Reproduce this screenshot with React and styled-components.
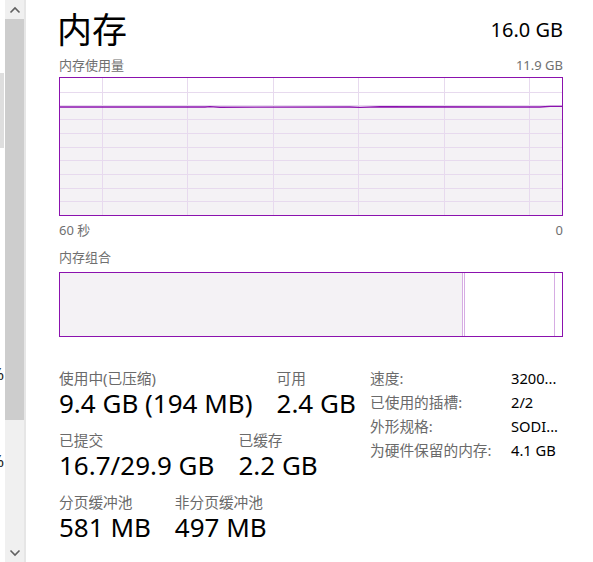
import React from "react";
import styled, { createGlobalStyle } from "styled-components";

const GlobalStyle = createGlobalStyle`
  html, body {
    margin: 0;
    padding: 0;
    background: #ffffff;
  }
  body {
    font-family: "Noto Sans", "Noto Sans CJK SC", sans-serif;
    color: #000;
  }
`;

const PURPLE = "#8b12ae";
const GRID = "#e7daee";
const FILL = "#f4f2f5";

const usage = [
  [0, 29], [145, 29], [150, 28.6], [160, 29.2], [290, 29], [300, 29.4], [320, 28.8],
  [480, 29], [490, 28.4], [502, 28.4],
];

function UsageChart() {
  const w = 502;
  const h = 137;
  const cols = [42, 127, 213, 298, 384, 469];
  const rows = Array.from({ length: 9 }, (_, i) => ((i + 1) * h) / 10);
  const pts = usage.map(([x, y]) => `${x},${y}`).join(" ");
  return (
    <ChartBox $height={139}>
      <svg width={w} height={h} viewBox={`0 0 ${w} ${h}`}>
        <polygon points={`0,${h} ${pts} ${w},${h}`} fill={FILL} />
        {cols.map((x) => (
          <line key={x} x1={x + 0.5} y1={0} x2={x + 0.5} y2={h} stroke={GRID} strokeWidth="1" />
        ))}
        {rows.map((y) => (
          <line key={y} x1={0} y1={Math.round(y) + 0.5} x2={w} y2={Math.round(y) + 0.5} stroke={GRID} strokeWidth="1" />
        ))}
        <polyline points={pts} fill="none" stroke={PURPLE} strokeWidth="1.4" />
      </svg>
    </ChartBox>
  );
}

function CompositionChart() {
  return (
    <ChartBox $height={65}>
      <svg width={502} height={63} viewBox="0 0 502 63">
        <rect x="0" y="0" width="402" height="63" fill={FILL} />
        <line x1="402.5" y1="0" x2="402.5" y2="63" stroke="#d6ace3" />
        <line x1="404.5" y1="0" x2="404.5" y2="63" stroke="#d6ace3" />
        <line x1="494.5" y1="0" x2="494.5" y2="63" stroke="#d6ace3" />
      </svg>
    </ChartBox>
  );
}

const stats = [
  [
    { label: "使用中(已压缩)", value: "9.4 GB (194 MB)" },
    { label: "可用", value: "2.4 GB" },
  ],
  [
    { label: "已提交", value: "16.7/29.9 GB" },
    { label: "已缓存", value: "2.2 GB" },
  ],
  [
    { label: "分页缓冲池", value: "581 MB" },
    { label: "非分页缓冲池", value: "497 MB" },
  ],
];

const specs = [
  ["速度:", "3200..."],
  ["已使用的插槽:", "2/2"],
  ["外形规格:", "SODI..."],
  ["为硬件保留的内存:", "4.1 GB"],
];

export default function App() {
  return (
    <>
      <GlobalStyle />
      <Window>
        <Side>
          <SideClip>
            <SideHighlight />
            <SideMark $top={362}>%</SideMark>
            <SideMark $top={449}>%</SideMark>
            <SideMark $top={543}>&lt;</SideMark>
          </SideClip>
          <Scrollbar>
            <ScrollArrow>
              <svg width="12" height="8" viewBox="0 0 12 8">
                <polyline points="1.5,6.5 6,2 10.5,6.5" fill="none" stroke="#606060" strokeWidth="1.6" />
              </svg>
            </ScrollArrow>
            <Thumb />
            <Track />
            <ScrollArrow>
              <svg width="12" height="8" viewBox="0 0 12 8">
                <polyline points="1.5,1.5 6,6 10.5,1.5" fill="none" stroke="#606060" strokeWidth="1.6" />
              </svg>
            </ScrollArrow>
          </Scrollbar>
        </Side>

        <Main>
          <TitleRow>
            <Title>内存</Title>
            <Total>16.0 GB</Total>
          </TitleRow>

          <CaptionRow>
            <span>内存使用量</span>
            <span>11.9 GB</span>
          </CaptionRow>
          <UsageChart />
          <CaptionRow $top={5}>
            <span>60 秒</span>
            <span>0</span>
          </CaptionRow>

          <CaptionRow $top={6} $bottom={3}>
            <span>内存组合</span>
          </CaptionRow>
          <CompositionChart />

          <Details>
            <StatsColumn>
              {stats.map((row, i) => (
                <StatRow key={i}>
                  {row.map((s) => (
                    <Stat key={s.label}>
                      <StatLabel>{s.label}</StatLabel>
                      <StatValue>{s.value}</StatValue>
                    </Stat>
                  ))}
                </StatRow>
              ))}
            </StatsColumn>
            <SpecGrid>
              {specs.map(([k, v]) => (
                <React.Fragment key={k}>
                  <SpecLabel>{k}</SpecLabel>
                  <SpecValue>{v}</SpecValue>
                </React.Fragment>
              ))}
            </SpecGrid>
          </Details>
        </Main>
      </Window>
    </>
  );
}

const Window = styled.div`
  display: flex;
  width: 593px;
  height: 562px;
  overflow: hidden;
  background: #fff;
`;

const Side = styled.div`
  display: flex;
  width: 24px;
  flex-shrink: 0;
  border-right: 2px solid #e6e6e6;
`;

const SideClip = styled.div`
  position: relative;
  width: 5px;
  overflow: hidden;
`;

const SideHighlight = styled.div`
  position: absolute;
  left: 0;
  top: 73px;
  width: 4px;
  height: 75px;
  background: #dedede;
`;

const SideMark = styled.span`
  position: absolute;
  top: ${(p) => p.$top}px;
  left: -10px;
  font-size: 17px;
  color: #1a1a1a;
`;

const Scrollbar = styled.div`
  display: flex;
  flex-direction: column;
  width: 19px;
  background: #f0f0f0;
`;

const ScrollArrow = styled.div`
  height: 19px;
  display: flex;
  align-items: center;
  justify-content: center;
  flex-shrink: 0;
`;

const Thumb = styled.div`
  height: 401px;
  background: #cdcdcd;
  flex-shrink: 0;
`;

const Track = styled.div`
  flex: 1;
`;

const Main = styled.div`
  flex: 1;
  padding: 0 30px 0 33px;
`;

const TitleRow = styled.div`
  display: flex;
  justify-content: space-between;
  align-items: flex-start;
  height: 56px;
`;

const Title = styled.div`
  font-family: "Noto Sans CJK SC", sans-serif;
  font-size: 35px;
  line-height: 56px;
  margin-left: -2px;
`;

const Total = styled.div`
  font-size: 20px;
  line-height: 28px;
  padding-top: 16px;
`;

const CaptionRow = styled.div`
  display: flex;
  justify-content: space-between;
  margin-top: ${(p) => p.$top || 0}px;
  margin-bottom: ${(p) => p.$bottom || 0}px;
  height: 21px;
  font-family: "Noto Sans", "Noto Sans CJK SC", sans-serif;
  font-size: 13px;
  line-height: 18px;
  color: #707070;
`;

const ChartBox = styled.div`
  height: ${(p) => p.$height}px;
  border: 1px solid ${PURPLE};
  box-sizing: border-box;
  overflow: hidden;
  svg {
    display: block;
  }
`;

const Details = styled.div`
  display: flex;
  margin-top: 31px;
`;

const StatsColumn = styled.div`
  display: flex;
  flex-direction: column;
  gap: 12px;
  width: 311px;
  flex-shrink: 0;
`;

const StatRow = styled.div`
  display: flex;
  gap: 24px;
`;

const Stat = styled.div`
  display: flex;
  flex-direction: column;
`;

const StatLabel = styled.div`
  font-size: 14.7px;
  line-height: 20px;
  color: #6a6a6a;
`;

const StatValue = styled.div`
  font-size: 26px;
  line-height: 30px;
  color: #000;
  white-space: nowrap;
`;

const SpecGrid = styled.div`
  display: grid;
  grid-template-columns: 141px auto;
  grid-auto-rows: 24px;
  align-content: start;
  font-size: 14.7px;
  line-height: 20px;
  white-space: nowrap;
`;

const SpecLabel = styled.div`
  color: #6a6a6a;
`;

const SpecValue = styled.div`
  color: #000;
`;
